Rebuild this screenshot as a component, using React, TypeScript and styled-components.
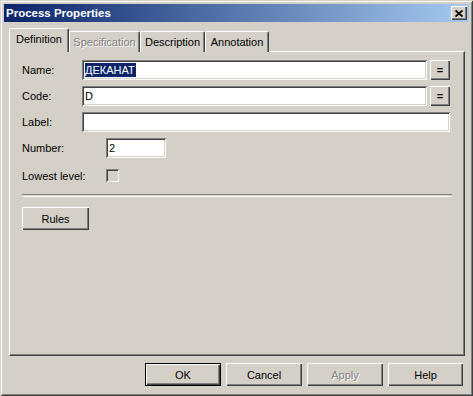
import styled, { createGlobalStyle, css } from "styled-components";

const FACE = "#d4d0c8";
const SHADOW = "#808080";
const DARK = "#404040";
const LIGHT = "#ffffff";

const GlobalStyle = createGlobalStyle`
  body {
    margin: 0;
    background: ${FACE};
    font-family: "Liberation Sans", Arial, sans-serif;
    font-size: 11px;
    color: #000;
  }
`;

const raised = css`
  background: ${FACE};
  box-shadow: inset 1px 1px ${LIGHT}, inset -1px -1px ${DARK}, inset -2px -2px ${SHADOW};
`;

const sunken = css`
  box-shadow: inset 1px 1px ${SHADOW}, inset -1px -1px ${LIGHT}, inset 2px 2px ${DARK},
    inset -2px -2px ${FACE};
`;

const disabledText = css`
  color: ${SHADOW};
  text-shadow: 1px 1px 0 ${LIGHT};
`;

const Window = styled.div`
  box-sizing: border-box;
  width: 473px;
  height: 396px;
  padding: 4px;
  background: ${FACE};
  box-shadow: inset 1px 1px ${FACE}, inset -1px -1px ${DARK}, inset 2px 2px ${LIGHT},
    inset -2px -2px ${SHADOW};
  display: flex;
  flex-direction: column;
`;

const TitleBar = styled.div`
  height: 18px;
  display: flex;
  align-items: center;
  justify-content: space-between;
  padding: 0 2px 0 1px;
  background: linear-gradient(to right, #0a246a, #a6caf0);
`;

const Title = styled.span`
  color: #fff;
  font-weight: bold;
  font-size: 11.5px;
  padding-left: 1px;
`;

const CloseButton = styled.div`
  ${raised};
  width: 16px;
  height: 14px;
  display: flex;
  align-items: center;
  justify-content: center;
`;

const Body = styled.div`
  flex: 1;
  display: flex;
  flex-direction: column;
  padding: 7px 5px 0 5px;
`;

const TabStrip = styled.div`
  display: flex;
  align-items: flex-end;
  height: 23px;
  position: relative;
  z-index: 1;
  margin-bottom: -1px;
`;

const Tab = styled.div<{ $width: number; $active?: boolean; $disabled?: boolean }>`
  box-sizing: border-box;
  width: ${(p) => p.$width}px;
  height: ${(p) => (p.$active ? 24 : 21)}px;
  display: flex;
  align-items: center;
  justify-content: center;
  padding-bottom: ${(p) => (p.$active ? 3 : 1)}px;
  background: ${FACE};
  border-top: 1px solid ${LIGHT};
  border-left: 1px solid ${LIGHT};
  border-right: 1px solid ${DARK};
  border-top-left-radius: 2px;
  border-top-right-radius: 2px;
  box-shadow: inset -1px 0 ${SHADOW};
  white-space: nowrap;
  ${(p) => p.$disabled && disabledText};
`;

const Panel = styled.div`
  box-sizing: border-box;
  width: 456px;
  height: 305px;
  padding: 8px 14px 0 12px;
  background: ${FACE};
  border-top: 1px solid ${LIGHT};
  border-left: 1px solid ${LIGHT};
  border-right: 1px solid ${DARK};
  border-bottom: 1px solid ${DARK};
  box-shadow: inset -1px -1px ${SHADOW};
  display: flex;
  flex-direction: column;
`;

const FieldRow = styled.div<{ $height?: number }>`
  display: flex;
  align-items: center;
  gap: 3px;
  height: ${(p) => p.$height ?? 20}px;
  margin-bottom: 6px;
`;

const FieldLabel = styled.span<{ $width: number }>`
  width: ${(p) => p.$width}px;
  margin-right: -3px;
  flex-shrink: 0;
`;

const TextBox = styled.div<{ $width?: number }>`
  ${sunken};
  box-sizing: border-box;
  height: 20px;
  background: #fff;
  padding: 0 3px;
  display: flex;
  align-items: center;
  ${(p) => (p.$width ? `width: ${p.$width}px;` : "flex: 1;")}
`;

const Selected = styled.span`
  background: #0a246a;
  color: #fff;
  line-height: 14px;
  padding-right: 1px;
`;

const EqButton = styled.div`
  ${raised};
  width: 20px;
  height: 20px;
  display: flex;
  align-items: center;
  justify-content: center;
  font-weight: bold;
  font-size: 11px;
`;

const CheckBox = styled.div`
  ${sunken};
  width: 13px;
  height: 13px;
  background: ${FACE};
`;

const Separator = styled.div`
  height: 1px;
  border-top: 1px solid ${SHADOW};
  border-bottom: 1px solid ${LIGHT};
  margin: 1px -2px 10px 0;
`;

const PushButton = styled.div<{ $width: number; $height?: number; $default?: boolean; $disabled?: boolean }>`
  box-sizing: border-box;
  width: ${(p) => p.$width}px;
  height: ${(p) => p.$height ?? 23}px;
  display: flex;
  align-items: center;
  justify-content: center;
  ${raised};
  ${(p) =>
    p.$default &&
    css`
      border: 1px solid #000;
    `};
  ${(p) => p.$disabled && disabledText};
`;

const ButtonBar = styled.div`
  display: flex;
  justify-content: flex-end;
  gap: 5px;
  margin-top: 7px;
  padding-right: 1px;
`;

const App = () => {
  return (
    <Window>
      <GlobalStyle />
      <TitleBar>
        <Title>Process Properties</Title>
        <CloseButton>
          <svg width="8" height="7" viewBox="0 0 8 7">
            <path d="M0.5 0.5 L7.5 6.5 M7.5 0.5 L0.5 6.5" stroke="#000" strokeWidth="1.8" />
          </svg>
        </CloseButton>
      </TitleBar>
      <Body>
        <TabStrip>
          <Tab $width={60} $active>
            Definition
          </Tab>
          <Tab $width={71} $disabled>
            Specification
          </Tab>
          <Tab $width={65}>Description</Tab>
          <Tab $width={64}>Annotation</Tab>
        </TabStrip>
        <Panel>
          <FieldRow>
            <FieldLabel $width={60}>Name:</FieldLabel>
            <TextBox>
              <Selected>ДЕКАНАТ</Selected>
            </TextBox>
            <EqButton>=</EqButton>
          </FieldRow>
          <FieldRow>
            <FieldLabel $width={60}>Code:</FieldLabel>
            <TextBox>D</TextBox>
            <EqButton>=</EqButton>
          </FieldRow>
          <FieldRow>
            <FieldLabel $width={60}>Label:</FieldLabel>
            <TextBox />
          </FieldRow>
          <FieldRow>
            <FieldLabel $width={84}>Number:</FieldLabel>
            <TextBox $width={60}>2</TextBox>
          </FieldRow>
          <FieldRow $height={23}>
            <FieldLabel $width={84}>Lowest level:</FieldLabel>
            <CheckBox />
          </FieldRow>
          <Separator />
          <PushButton $width={67} $height={23}>
            Rules
          </PushButton>
        </Panel>
        <ButtonBar>
          <PushButton $width={76} $default>
            OK
          </PushButton>
          <PushButton $width={76}>Cancel</PushButton>
          <PushButton $width={76} $disabled>
            Apply
          </PushButton>
          <PushButton $width={75}>Help</PushButton>
        </ButtonBar>
      </Body>
    </Window>
  );
};

export default App;
